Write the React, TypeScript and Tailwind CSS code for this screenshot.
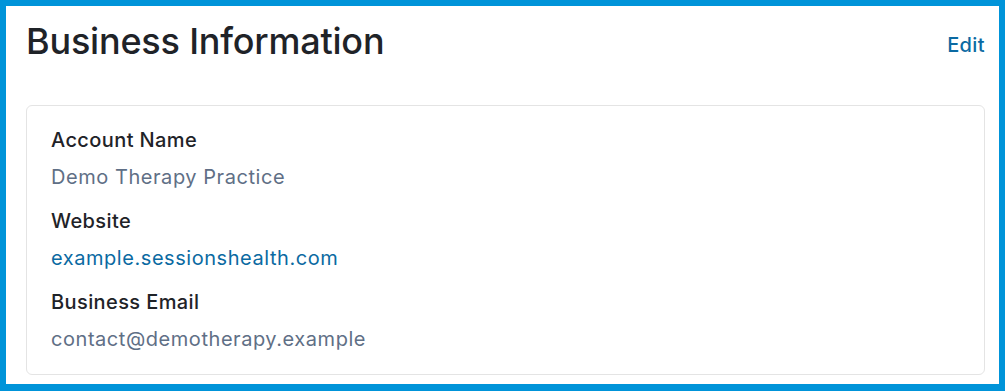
export default function App() {
  const fields = [
    { label: "Account Name", value: "Demo Therapy Practice", link: false },
    { label: "Website", value: "example.sessionshealth.com", link: true },
    { label: "Business Email", value: "contact@demotherapy.example", link: false },
  ];

  return (
    <div className="h-[391px] w-[1005px] border-t-[6px] border-r-[6px] border-b-[7px] border-l-[6px] border-[#0094d9] bg-white font-['Inter',sans-serif]">
      <div className="pl-5 pr-[14px] pt-[15px]">
        <div className="flex items-center justify-between">
          <h1 className="text-[36px] leading-[40px] font-medium tracking-[-0.2px] text-[#1f2328]">
            Business Information
          </h1>
          <a className="mt-2 text-[20px] leading-7 font-medium tracking-[0.4px] text-[#0b6aa2]">Edit</a>
        </div>
        <div className="mt-[44px] flex flex-col gap-4 rounded-md border border-[#e4e4e4] px-6 pt-[20px] pb-[21px]">
          {fields.map((f) => (
            <div key={f.label} className="flex flex-col">
              <span className="text-[20px] leading-7 font-medium tracking-[0.4px] text-[#1f2328]">{f.label}</span>
              <span
                className={`mt-[9px] text-[20px] leading-7 tracking-[0.55px] ${f.link ? "text-[#0b6aa2]" : "text-[#5f6f86]"}`}
              >
                {f.value}
              </span>
            </div>
          ))}
        </div>
      </div>
    </div>
  );
}
